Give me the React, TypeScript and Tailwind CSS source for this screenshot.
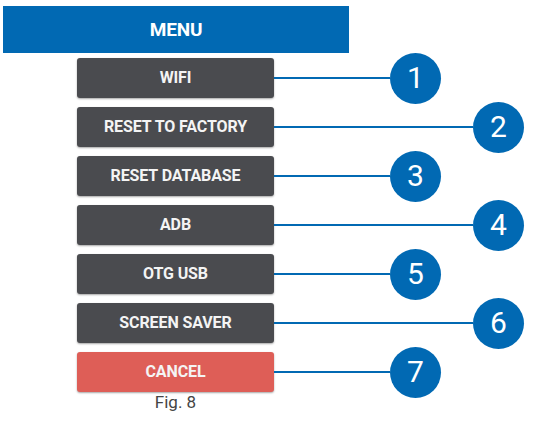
import React from "react";

const items = [
  { label: "WIFI", n: 1, far: false, cancel: false },
  { label: "RESET TO FACTORY", n: 2, far: true, cancel: false },
  { label: "RESET DATABASE", n: 3, far: false, cancel: false },
  { label: "ADB", n: 4, far: true, cancel: false },
  { label: "OTG USB", n: 5, far: false, cancel: false },
  { label: "SCREEN SAVER", n: 6, far: true, cancel: false },
  { label: "CANCEL", n: 7, far: false, cancel: true },
];

export default function App() {
  return (
    <div
      className="w-[533px] h-[424px] bg-white overflow-hidden pt-[6px]"
      style={{ fontFamily: "Roboto, 'Liberation Sans', sans-serif" }}
    >
      <div className="ml-[3px] w-[346px] h-[47px] bg-[#0169b3] flex items-center justify-center">
        <span className="text-white font-bold text-[19px] leading-none tracking-[-0.2px]">MENU</span>
      </div>
      <div className="pl-[77px] mt-[5px] flex flex-col gap-[9px]">
        {items.map((it) => (
          <div key={it.n} className="flex items-center h-[40px]">
            <div
              className={`w-[197px] h-[40px] rounded-[3px] flex items-center justify-center shadow-[0_1px_2px_rgba(0,0,0,0.35)] ${
                it.cancel ? "bg-[#de5e57]" : "bg-[#4a4b4f]"
              }`}
            >
              <span className="text-[#f4f4f4] font-bold text-[16px] leading-none tracking-[-0.1px]">
                {it.label}
              </span>
            </div>
            <div
              className={`h-[2px] bg-[#0169b3] ${it.far ? "w-[199px]" : "w-[116px]"}`}
            />
            <div className="w-[51px] h-[51px] shrink-0 rounded-full bg-[#0169b3] flex items-center justify-center">
              <span className="text-white text-[30px] leading-none">{it.n}</span>
            </div>
          </div>
        ))}
      </div>
      <div className="pl-[77px] w-[274px] mt-0 flex justify-center">
        <span className="text-[#444] text-[17px] leading-[20px]">Fig. 8</span>
      </div>
    </div>
  );
}
